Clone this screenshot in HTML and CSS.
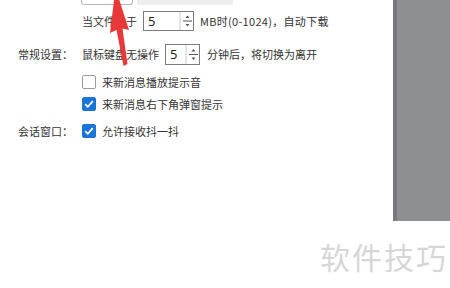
FILE: index.html
```html
<!DOCTYPE html>
<html lang="zh-CN">
<head>
    <meta charset="UTF-8">
    <title>设置</title>
    <link rel="stylesheet" href="styles.css">
</head>
<body>
    <div class="page">
        <div class="settings">
            <div class="top-strip">
                <div class="stub-btn"></div>
                <div class="stub-bar"></div>
            </div>

            <div class="row first">
                <div class="label"></div>
                <span class="text">当文件大于</span>
                <div class="spin wide">
                    <span class="value">5</span>
                    <svg class="arrows" width="14" height="18" viewBox="0 0 14 18">
                        <path d="M1 0V18" stroke="#c8c8c8" stroke-width="1"/>
                        <path d="M4 9H13" stroke="#555" stroke-width="1"/>
                        <path d="M6.5 6L8.5 3.5L10.5 6Z" fill="#555"/>
                        <path d="M6.5 12L8.5 14.5L10.5 12Z" fill="#555"/>
                    </svg>
                </div>
                <span class="text latin">MB时(0-1024)，自动下载</span>
            </div>

            <div class="row second">
                <div class="label">常规设置：</div>
                <span class="text">鼠标键盘无操作</span>
                <div class="spin narrow">
                    <span class="value">5</span>
                    <svg class="arrows" width="14" height="19" viewBox="0 0 14 19">
                        <path d="M1 0V19" stroke="#c8c8c8" stroke-width="1"/>
                        <path d="M4 9.5H13" stroke="#555" stroke-width="1"/>
                        <path d="M6.5 6.5L8.5 4L10.5 6.5Z" fill="#555"/>
                        <path d="M6.5 12.5L8.5 15L10.5 12.5Z" fill="#555"/>
                    </svg>
                </div>
                <span class="text">分钟后，将切换为离开</span>
            </div>

            <div class="row third">
                <div class="label"></div>
                <span class="check"></span>
                <span class="text">来新消息播放提示音</span>
            </div>

            <div class="row fourth">
                <div class="label"></div>
                <span class="check on">
                    <svg width="12" height="12" viewBox="0 0 12 12"><path d="M2.2 6.2L4.8 8.8L9.8 3.2" fill="none" stroke="#fff" stroke-width="1.8"/></svg>
                </span>
                <span class="text">来新消息右下角弹窗提示</span>
            </div>

            <div class="row fifth">
                <div class="label">会话窗口：</div>
                <span class="check on">
                    <svg width="12" height="12" viewBox="0 0 12 12"><path d="M2.2 6.2L4.8 8.8L9.8 3.2" fill="none" stroke="#fff" stroke-width="1.8"/></svg>
                </span>
                <span class="text">允许接收抖一抖</span>
            </div>
        </div>

        <div class="side"></div>
    </div>

    <!-- 标注箭头 -->
    <svg class="pointer" width="450" height="288" viewBox="0 0 450 288">
        <polygon points="115.5,-12 129,30 122.5,28.5 127.5,64 123.5,66 116.5,30 110,33" fill="#e8393a"/>
    </svg>

    <div class="watermark">软件技巧</div>
</body>
</html>
```

FILE: styles.css
```css
body {
    margin: 0;
    background-color: #fff;
    font-family: "Noto Sans CJK SC", "Noto Sans", sans-serif;
    font-size: 11px;
    color: #333;
    overflow: hidden;
}
.page {
    display: flex;
    align-items: flex-start;
}
.settings {
    flex: 1;
}
.side {
    width: 53px;
    height: 221px;
    background-color: #8e8f93;
    border-left: 4px solid #77797c;
}
.top-strip {
    display: flex;
    height: 5px;
    padding-left: 81px;
    gap: 4px;
}
.stub-btn {
    width: 50px;
    height: 4px;
    border: 1px solid #b8b8b8;
    border-top: none;
    border-radius: 0 0 3px 3px;
    background-color: #fff;
}
.stub-bar {
    width: 96px;
    height: 5px;
    background-color: #ededed;
}
.row {
    display: flex;
    align-items: center;
    height: 20px;
    padding-left: 18px;
    white-space: nowrap;
}
.row.first { margin-top: 6px; }
.row.second { margin-top: 13px; }
.row.third { margin-top: 8px; }
.row.fourth { margin-top: 2px; }
.row.fifth { margin-top: 7px; }
.label {
    width: 64px;
    flex-shrink: 0;
}
.text.latin {
    letter-spacing: 0.3px;
}
.spin {
    display: flex;
    align-items: center;
    justify-content: space-between;
    box-sizing: border-box;
    height: 20px;
    margin: 0 6px;
    border: 1px solid #7c7c7c;
    background-color: #fff;
}
.spin.wide { width: 51px; }
.spin.narrow {
    width: 35px;
    height: 21px;
    margin-right: 7px;
}
.spin .value {
    padding-left: 4px;
    font-family: "Noto Sans", sans-serif;
    font-size: 13px;
    color: #222;
}
.check {
    display: flex;
    align-items: center;
    justify-content: center;
    box-sizing: border-box;
    width: 14px;
    height: 14px;
    margin-right: 6px;
    border: 1px solid #9a9a9a;
    border-radius: 2px;
    background-color: #fff;
}
.check.on {
    border-color: #1b74d8;
    background-color: #1b74d8;
}
.pointer {
    position: absolute;
    left: 0;
    top: 0;
}
.watermark {
    position: absolute;
    left: 320px;
    top: 234px;
    font-size: 30px;
    letter-spacing: 2px;
    color: #d6d6d6;
}
```
